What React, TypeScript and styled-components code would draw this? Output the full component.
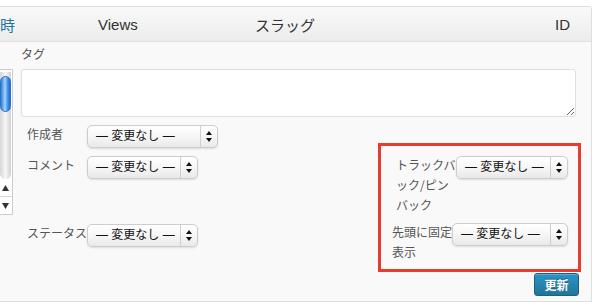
import styled, { createGlobalStyle } from 'styled-components';

const GlobalStyle = createGlobalStyle`
   html, body {
      margin: 0;
      padding: 0;
      background: #ffffff;
      overflow: hidden;
   }
   * {
      box-sizing: border-box;
   }
`;

const Page = styled.div`
   width: 600px;
   height: 302px;
   padding-top: 6px;
   font-family: 'Liberation Sans', 'Noto Sans CJK JP', sans-serif;
`;

const Panel = styled.div`
   width: 592px;
   height: 296px;
   border: 1px solid #dfdfdf;
   border-left: none;
   border-radius: 0 3px 0 0;
   background: #f9f9f9;
   display: flex;
   flex-direction: column;
`;

const HeaderRow = styled.div`
   display: grid;
   grid-template-columns: 98px 157px 300px 1fr;
   align-items: center;
   height: 35px;
   border-bottom: 1px solid #dfdfdf;
   background: linear-gradient(#f9f9f9, #ececec);
   font-size: 15px;
   color: #333333;
`;

const HeaderCell = styled.div<{ $link?: boolean }>`
   white-space: nowrap;
   color: ${(props) => (props.$link ? '#21759b' : '#333333')};
`;

const Body = styled.div`
   display: flex;
   flex: 1;
   padding: 1px 10px 0 0;
`;

const ScrollCol = styled.div`
   width: 13px;
   height: 146px;
   margin-top: 26px;
   border: 1px solid #cccccc;
   border-left: none;
   background: #ffffff;
   display: flex;
   flex-direction: column;
`;

const Track = styled.div`
   flex: 1;
   margin: 2px 1px 0 0;
   border-radius: 0 0 6px 6px;
   background: linear-gradient(90deg, #d6d6d6, #f6f6f6 50%, #d0d0d0);
   display: flex;
   flex-direction: column;
`;

const Thumb = styled.div`
   height: 36px;
   margin-top: 4px;
   border-radius: 6px;
   border: 1px solid #2d6fc0;
   background: linear-gradient(90deg, #2f7fde, #a9d3fb 45%, #4a9af0 70%, #2168c9);
`;

const ArrowBox = styled.div`
   height: 35px;
   display: flex;
   flex-direction: column;
`;

const ArrowCell = styled.div<{ $top?: boolean }>`
   flex: 1;
   display: flex;
   align-items: center;
   justify-content: center;
   padding-right: 1px;
   ${(props) => (props.$top ? 'border-bottom: 1px solid #d8d8d8;' : '')}
`;

const Main = styled.div`
   flex: 1;
   margin-left: 8px;
   display: flex;
   flex-direction: column;
`;

const TagLabel = styled.div`
   font-family: 'Noto Sans CJK JP', sans-serif;
   font-size: 12px;
   line-height: 21px;
   color: #555555;
`;

const TagArea = styled.textarea`
   width: calc(100% - 5px);
   height: 48px;
   margin-top: 5px;
   border: 1px solid #dfdfdf;
   border-radius: 3px;
   background: #ffffff;
   outline: none;
   resize: vertical;
`;

const FieldGrid = styled.div`
   display: grid;
   grid-template-columns: 1fr 203px;
   grid-template-rows: 31px 68px auto;
   margin-top: 8px;
`;

const LeftRow = styled.div<{ $row: number }>`
   grid-column: 1;
   grid-row: ${(props) => props.$row};
   display: flex;
   align-items: flex-start;
`;

const LeftLabel = styled.span`
   width: 66px;
   padding-left: 6px;
   margin-top: -1px;
   white-space: nowrap;
   font-family: 'Noto Sans CJK JP', sans-serif;
   font-size: 12px;
   line-height: 20px;
   color: #555555;
`;

const Highlight = styled.div`
   grid-column: 2;
   grid-row: 1 / 4;
   align-self: start;
   margin-top: 18px;
   border: 3px solid #e63b2e;
   padding: 10px 10px 7px 0;
   display: flex;
   flex-direction: column;
   gap: 8px;
`;

const RightRow = styled.div`
   display: flex;
   align-items: flex-start;
`;

const RightLabel = styled.span<{ $indent: number }>`
   width: 60px;
   margin-left: ${(props) => props.$indent}px;
   margin-top: -1px;
   font-family: 'Noto Sans CJK JP', sans-serif;
   font-size: 12px;
   line-height: 20px;
   color: #555555;
   word-break: break-all;
`;

const SelectBox = styled.div<{ $width: number }>`
   width: ${(props) => props.$width}px;
   height: 23px;
   display: flex;
   border: 1px solid #cdcdcd;
   border-radius: 5px;
   background: linear-gradient(#ffffff, #f6f6f6 50%, #e9e9e9);
   box-shadow: 0 1px 2px rgba(0, 0, 0, 0.12);
   flex-shrink: 0;
`;

const SelectText = styled.span`
   flex: 1;
   padding-left: 8px;
   font-family: 'Liberation Sans', 'Noto Sans CJK JP', sans-serif;
   font-size: 12px;
   line-height: 21px;
   color: #111111;
   white-space: nowrap;
   overflow: hidden;
`;

const SelectArrows = styled.span`
   width: 17px;
   border-left: 1px solid #cfcfcf;
   display: flex;
   align-items: center;
   justify-content: center;
`;

const Footer = styled.div`
   display: flex;
   justify-content: flex-end;
   margin-top: 1px;
   padding-right: 2px;
`;

const UpdateButton = styled.button`
   width: 45px;
   height: 23px;
   padding: 0;
   border: 1px solid #1b607f;
   border-radius: 3px;
   background: linear-gradient(#2a95c5, #21759b);
   box-shadow: inset 0 1px 0 rgba(120, 200, 230, 0.5);
   color: #ffffff;
   font-family: 'Noto Sans CJK JP', sans-serif;
   font-size: 12px;
   font-weight: bold;
   text-shadow: 0 -1px 0 rgba(0, 0, 0, 0.3);
   cursor: pointer;
`;

const Dropdown = ({ width }: { width: number }) => (
   <SelectBox $width={width}>
      <SelectText>— 変更なし —</SelectText>
      <SelectArrows>
         <svg width="6" height="11" viewBox="0 0 6 11">
            <polygon points="0,4 3,0 6,4" fill="#111" />
            <polygon points="0,7 3,11 6,7" fill="#111" />
         </svg>
      </SelectArrows>
   </SelectBox>
);

export default function App() {
   return (
      <>
         <GlobalStyle />
         <Page>
            <Panel>
               <HeaderRow>
                  <HeaderCell $link>時</HeaderCell>
                  <HeaderCell>Views</HeaderCell>
                  <HeaderCell>スラッグ</HeaderCell>
                  <HeaderCell>ID</HeaderCell>
               </HeaderRow>
               <Body>
                  <ScrollCol>
                     <Track>
                        <Thumb />
                     </Track>
                     <ArrowBox>
                        <ArrowCell $top>
                           <svg width="7" height="6" viewBox="0 0 7 6">
                              <polygon points="0,6 3.5,0 7,6" fill="#333" />
                           </svg>
                        </ArrowCell>
                        <ArrowCell>
                           <svg width="7" height="6" viewBox="0 0 7 6">
                              <polygon points="0,0 3.5,6 7,0" fill="#333" />
                           </svg>
                        </ArrowCell>
                     </ArrowBox>
                  </ScrollCol>
                  <Main>
                     <TagLabel>タグ</TagLabel>
                     <TagArea />
                     <FieldGrid>
                        <LeftRow $row={1}>
                           <LeftLabel>作成者</LeftLabel>
                           <Dropdown width={131} />
                        </LeftRow>
                        <LeftRow $row={2}>
                           <LeftLabel>コメント</LeftLabel>
                           <Dropdown width={111} />
                        </LeftRow>
                        <LeftRow $row={3}>
                           <LeftLabel>ステータス</LeftLabel>
                           <Dropdown width={111} />
                        </LeftRow>
                        <Highlight>
                           <RightRow>
                              <RightLabel $indent={15}>トラックバック/ピンバック</RightLabel>
                              <Dropdown width={112} />
                           </RightRow>
                           <RightRow>
                              <RightLabel $indent={11}>先頭に固定表示</RightLabel>
                              <Dropdown width={116} />
                           </RightRow>
                        </Highlight>
                     </FieldGrid>
                     <Footer>
                        <UpdateButton>更新</UpdateButton>
                     </Footer>
                  </Main>
               </Body>
            </Panel>
         </Page>
      </>
   );
}
